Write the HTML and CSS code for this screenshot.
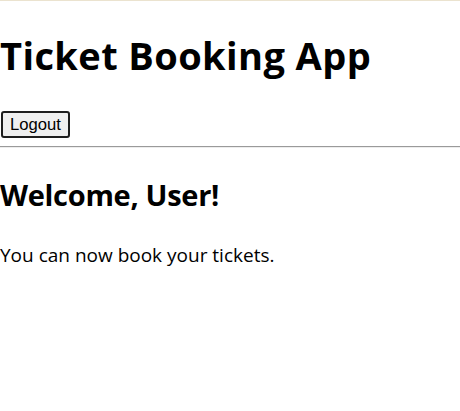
FILE: index.html
```html
<!DOCTYPE html>
<html lang="en">
<head>
<meta charset="utf-8">
<title>Ticket Booking App</title>
<link rel="stylesheet" href="styles.css">
</head>
<body>
<div class="topline"></div>
<div class="app">
  <h1 class="title">Ticket Booking App</h1>
  <div class="actions"><button class="logout" type="button">Logout</button></div>
  <hr class="divider">
  <h2 class="welcome">Welcome, User!</h2>
  <p class="message">You can now book your tickets.</p>
</div>
</body>
</html>
```

FILE: styles.css
```css
html, body {
  margin: 0;
  padding: 0;
  background: #ffffff;
}

body {
  font-family: "Open Sans", "Noto Sans", sans-serif;
  font-size: 19px;
  color: #000;
}

.topline {
  height: 1px;
  background: #ebe3cf;
}

.app {
  display: flow-root;
}

.title {
  font-size: 38px;
  font-weight: 700;
  line-height: 53px;
  letter-spacing: 0.4px;
  margin: 28px 0 26px;
}

.actions {
  height: 30px;
  display: flex;
  align-items: flex-end;
}

.logout {
  font-family: "Liberation Sans", Arial, sans-serif;
  font-size: 16.67px;
  line-height: 19px;
  padding: 2px 7px;
  margin: 0 0 0 1px;
  background: #efefef;
  border: 2px solid #1e1e1e;
  border-radius: 3px;
  color: #000;
  height: 27px;
}

.divider {
  margin: 8px 0 0;
  border: 0;
  border-top: 1px solid #9a9a9a;
  border-bottom: 1px solid #ededed;
  height: 0;
}

.welcome {
  font-size: 29px;
  font-weight: 700;
  line-height: 40px;
  letter-spacing: -0.3px;
  margin: 27px 0 27px;
}

.message {
  font-size: 19px;
  line-height: 26px;
  margin: 27px 0;
}
```
